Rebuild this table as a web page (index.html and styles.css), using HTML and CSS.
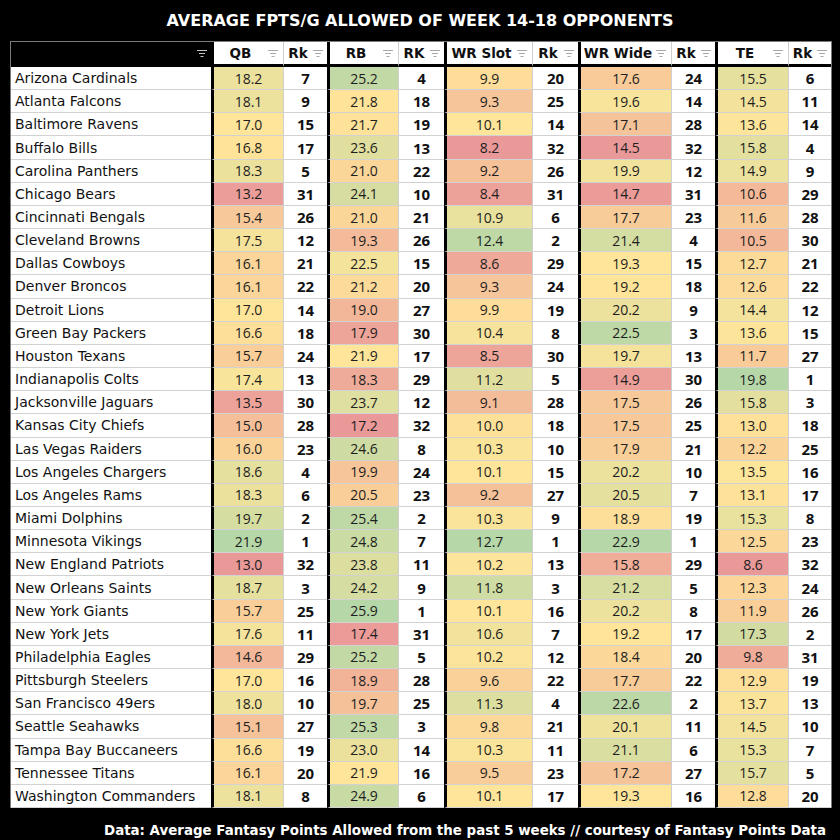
FILE: index.html
```html
<!DOCTYPE html>
<html lang="en">
<head>
<meta charset="utf-8">
<title>Average FPTS/G Allowed of Week 14-18 Opponents</title>
<link rel="stylesheet" href="styles.css">
</head>
<body>
<h1 class="title">AVERAGE FPTS/G ALLOWED OF WEEK 14-18 OPPONENTS</h1>
<div class="sheet">
  <div class="row head">
    <div class="hcell corner"><svg class="flt" viewBox="0 0 10 7"><path d="M0 .5h10M2 3.5h6M3.5 6.5h3"/></svg></div>
    <div class="hcell"><span class="lbl">QB</span><svg class="flt" viewBox="0 0 10 7"><path d="M0 .5h10M2 3.5h6M3.5 6.5h3"/></svg></div>
    <div class="hcell"><span class="lbl">Rk</span><svg class="flt" viewBox="0 0 10 7"><path d="M0 .5h10M2 3.5h6M3.5 6.5h3"/></svg></div>
    <div class="hcell"><span class="lbl">RB</span><svg class="flt" viewBox="0 0 10 7"><path d="M0 .5h10M2 3.5h6M3.5 6.5h3"/></svg></div>
    <div class="hcell"><span class="lbl">RK</span><svg class="flt" viewBox="0 0 10 7"><path d="M0 .5h10M2 3.5h6M3.5 6.5h3"/></svg></div>
    <div class="hcell"><span class="lbl">WR Slot</span><svg class="flt" viewBox="0 0 10 7"><path d="M0 .5h10M2 3.5h6M3.5 6.5h3"/></svg></div>
    <div class="hcell"><span class="lbl">Rk</span><svg class="flt" viewBox="0 0 10 7"><path d="M0 .5h10M2 3.5h6M3.5 6.5h3"/></svg></div>
    <div class="hcell"><span class="lbl">WR Wide</span><svg class="flt" viewBox="0 0 10 7"><path d="M0 .5h10M2 3.5h6M3.5 6.5h3"/></svg></div>
    <div class="hcell"><span class="lbl">Rk</span><svg class="flt" viewBox="0 0 10 7"><path d="M0 .5h10M2 3.5h6M3.5 6.5h3"/></svg></div>
    <div class="hcell"><span class="lbl">TE</span><svg class="flt" viewBox="0 0 10 7"><path d="M0 .5h10M2 3.5h6M3.5 6.5h3"/></svg></div>
    <div class="hcell"><span class="lbl">Rk</span><svg class="flt" viewBox="0 0 10 7"><path d="M0 .5h10M2 3.5h6M3.5 6.5h3"/></svg></div>
  </div>
  <div class="body">
    <div class="row"><span class="cell name">Arizona Cardinals</span><span class="cell val">18.2</span><span class="cell rk">7</span><span class="cell val">25.2</span><span class="cell rk">4</span><span class="cell val">9.9</span><span class="cell rk">20</span><span class="cell val">17.6</span><span class="cell rk">24</span><span class="cell val">15.5</span><span class="cell rk">6</span></div>
    <div class="row"><span class="cell name">Atlanta Falcons</span><span class="cell val">18.1</span><span class="cell rk">9</span><span class="cell val">21.8</span><span class="cell rk">18</span><span class="cell val">9.3</span><span class="cell rk">25</span><span class="cell val">19.6</span><span class="cell rk">14</span><span class="cell val">14.5</span><span class="cell rk">11</span></div>
    <div class="row"><span class="cell name">Baltimore Ravens</span><span class="cell val">17.0</span><span class="cell rk">15</span><span class="cell val">21.7</span><span class="cell rk">19</span><span class="cell val">10.1</span><span class="cell rk">14</span><span class="cell val">17.1</span><span class="cell rk">28</span><span class="cell val">13.6</span><span class="cell rk">14</span></div>
    <div class="row"><span class="cell name">Buffalo Bills</span><span class="cell val">16.8</span><span class="cell rk">17</span><span class="cell val">23.6</span><span class="cell rk">13</span><span class="cell val">8.2</span><span class="cell rk">32</span><span class="cell val">14.5</span><span class="cell rk">32</span><span class="cell val">15.8</span><span class="cell rk">4</span></div>
    <div class="row"><span class="cell name">Carolina Panthers</span><span class="cell val">18.3</span><span class="cell rk">5</span><span class="cell val">21.0</span><span class="cell rk">22</span><span class="cell val">9.2</span><span class="cell rk">26</span><span class="cell val">19.9</span><span class="cell rk">12</span><span class="cell val">14.9</span><span class="cell rk">9</span></div>
    <div class="row"><span class="cell name">Chicago Bears</span><span class="cell val">13.2</span><span class="cell rk">31</span><span class="cell val">24.1</span><span class="cell rk">10</span><span class="cell val">8.4</span><span class="cell rk">31</span><span class="cell val">14.7</span><span class="cell rk">31</span><span class="cell val">10.6</span><span class="cell rk">29</span></div>
    <div class="row"><span class="cell name">Cincinnati Bengals</span><span class="cell val">15.4</span><span class="cell rk">26</span><span class="cell val">21.0</span><span class="cell rk">21</span><span class="cell val">10.9</span><span class="cell rk">6</span><span class="cell val">17.7</span><span class="cell rk">23</span><span class="cell val">11.6</span><span class="cell rk">28</span></div>
    <div class="row"><span class="cell name">Cleveland Browns</span><span class="cell val">17.5</span><span class="cell rk">12</span><span class="cell val">19.3</span><span class="cell rk">26</span><span class="cell val">12.4</span><span class="cell rk">2</span><span class="cell val">21.4</span><span class="cell rk">4</span><span class="cell val">10.5</span><span class="cell rk">30</span></div>
    <div class="row"><span class="cell name">Dallas Cowboys</span><span class="cell val">16.1</span><span class="cell rk">21</span><span class="cell val">22.5</span><span class="cell rk">15</span><span class="cell val">8.6</span><span class="cell rk">29</span><span class="cell val">19.3</span><span class="cell rk">15</span><span class="cell val">12.7</span><span class="cell rk">21</span></div>
    <div class="row"><span class="cell name">Denver Broncos</span><span class="cell val">16.1</span><span class="cell rk">22</span><span class="cell val">21.2</span><span class="cell rk">20</span><span class="cell val">9.3</span><span class="cell rk">24</span><span class="cell val">19.2</span><span class="cell rk">18</span><span class="cell val">12.6</span><span class="cell rk">22</span></div>
    <div class="row"><span class="cell name">Detroit Lions</span><span class="cell val">17.0</span><span class="cell rk">14</span><span class="cell val">19.0</span><span class="cell rk">27</span><span class="cell val">9.9</span><span class="cell rk">19</span><span class="cell val">20.2</span><span class="cell rk">9</span><span class="cell val">14.4</span><span class="cell rk">12</span></div>
    <div class="row"><span class="cell name">Green Bay Packers</span><span class="cell val">16.6</span><span class="cell rk">18</span><span class="cell val">17.9</span><span class="cell rk">30</span><span class="cell val">10.4</span><span class="cell rk">8</span><span class="cell val">22.5</span><span class="cell rk">3</span><span class="cell val">13.6</span><span class="cell rk">15</span></div>
    <div class="row"><span class="cell name">Houston Texans</span><span class="cell val">15.7</span><span class="cell rk">24</span><span class="cell val">21.9</span><span class="cell rk">17</span><span class="cell val">8.5</span><span class="cell rk">30</span><span class="cell val">19.7</span><span class="cell rk">13</span><span class="cell val">11.7</span><span class="cell rk">27</span></div>
    <div class="row"><span class="cell name">Indianapolis Colts</span><span class="cell val">17.4</span><span class="cell rk">13</span><span class="cell val">18.3</span><span class="cell rk">29</span><span class="cell val">11.2</span><span class="cell rk">5</span><span class="cell val">14.9</span><span class="cell rk">30</span><span class="cell val">19.8</span><span class="cell rk">1</span></div>
    <div class="row"><span class="cell name">Jacksonville Jaguars</span><span class="cell val">13.5</span><span class="cell rk">30</span><span class="cell val">23.7</span><span class="cell rk">12</span><span class="cell val">9.1</span><span class="cell rk">28</span><span class="cell val">17.5</span><span class="cell rk">26</span><span class="cell val">15.8</span><span class="cell rk">3</span></div>
    <div class="row"><span class="cell name">Kansas City Chiefs</span><span class="cell val">15.0</span><span class="cell rk">28</span><span class="cell val">17.2</span><span class="cell rk">32</span><span class="cell val">10.0</span><span class="cell rk">18</span><span class="cell val">17.5</span><span class="cell rk">25</span><span class="cell val">13.0</span><span class="cell rk">18</span></div>
    <div class="row"><span class="cell name">Las Vegas Raiders</span><span class="cell val">16.0</span><span class="cell rk">23</span><span class="cell val">24.6</span><span class="cell rk">8</span><span class="cell val">10.3</span><span class="cell rk">10</span><span class="cell val">17.9</span><span class="cell rk">21</span><span class="cell val">12.2</span><span class="cell rk">25</span></div>
    <div class="row"><span class="cell name">Los Angeles Chargers</span><span class="cell val">18.6</span><span class="cell rk">4</span><span class="cell val">19.9</span><span class="cell rk">24</span><span class="cell val">10.1</span><span class="cell rk">15</span><span class="cell val">20.2</span><span class="cell rk">10</span><span class="cell val">13.5</span><span class="cell rk">16</span></div>
    <div class="row"><span class="cell name">Los Angeles Rams</span><span class="cell val">18.3</span><span class="cell rk">6</span><span class="cell val">20.5</span><span class="cell rk">23</span><span class="cell val">9.2</span><span class="cell rk">27</span><span class="cell val">20.5</span><span class="cell rk">7</span><span class="cell val">13.1</span><span class="cell rk">17</span></div>
    <div class="row"><span class="cell name">Miami Dolphins</span><span class="cell val">19.7</span><span class="cell rk">2</span><span class="cell val">25.4</span><span class="cell rk">2</span><span class="cell val">10.3</span><span class="cell rk">9</span><span class="cell val">18.9</span><span class="cell rk">19</span><span class="cell val">15.3</span><span class="cell rk">8</span></div>
    <div class="row"><span class="cell name">Minnesota Vikings</span><span class="cell val">21.9</span><span class="cell rk">1</span><span class="cell val">24.8</span><span class="cell rk">7</span><span class="cell val">12.7</span><span class="cell rk">1</span><span class="cell val">22.9</span><span class="cell rk">1</span><span class="cell val">12.5</span><span class="cell rk">23</span></div>
    <div class="row"><span class="cell name">New England Patriots</span><span class="cell val">13.0</span><span class="cell rk">32</span><span class="cell val">23.8</span><span class="cell rk">11</span><span class="cell val">10.2</span><span class="cell rk">13</span><span class="cell val">15.8</span><span class="cell rk">29</span><span class="cell val">8.6</span><span class="cell rk">32</span></div>
    <div class="row"><span class="cell name">New Orleans Saints</span><span class="cell val">18.7</span><span class="cell rk">3</span><span class="cell val">24.2</span><span class="cell rk">9</span><span class="cell val">11.8</span><span class="cell rk">3</span><span class="cell val">21.2</span><span class="cell rk">5</span><span class="cell val">12.3</span><span class="cell rk">24</span></div>
    <div class="row"><span class="cell name">New York Giants</span><span class="cell val">15.7</span><span class="cell rk">25</span><span class="cell val">25.9</span><span class="cell rk">1</span><span class="cell val">10.1</span><span class="cell rk">16</span><span class="cell val">20.2</span><span class="cell rk">8</span><span class="cell val">11.9</span><span class="cell rk">26</span></div>
    <div class="row"><span class="cell name">New York Jets</span><span class="cell val">17.6</span><span class="cell rk">11</span><span class="cell val">17.4</span><span class="cell rk">31</span><span class="cell val">10.6</span><span class="cell rk">7</span><span class="cell val">19.2</span><span class="cell rk">17</span><span class="cell val">17.3</span><span class="cell rk">2</span></div>
    <div class="row"><span class="cell name">Philadelphia Eagles</span><span class="cell val">14.6</span><span class="cell rk">29</span><span class="cell val">25.2</span><span class="cell rk">5</span><span class="cell val">10.2</span><span class="cell rk">12</span><span class="cell val">18.4</span><span class="cell rk">20</span><span class="cell val">9.8</span><span class="cell rk">31</span></div>
    <div class="row"><span class="cell name">Pittsburgh Steelers</span><span class="cell val">17.0</span><span class="cell rk">16</span><span class="cell val">18.9</span><span class="cell rk">28</span><span class="cell val">9.6</span><span class="cell rk">22</span><span class="cell val">17.7</span><span class="cell rk">22</span><span class="cell val">12.9</span><span class="cell rk">19</span></div>
    <div class="row"><span class="cell name">San Francisco 49ers</span><span class="cell val">18.0</span><span class="cell rk">10</span><span class="cell val">19.7</span><span class="cell rk">25</span><span class="cell val">11.3</span><span class="cell rk">4</span><span class="cell val">22.6</span><span class="cell rk">2</span><span class="cell val">13.7</span><span class="cell rk">13</span></div>
    <div class="row"><span class="cell name">Seattle Seahawks</span><span class="cell val">15.1</span><span class="cell rk">27</span><span class="cell val">25.3</span><span class="cell rk">3</span><span class="cell val">9.8</span><span class="cell rk">21</span><span class="cell val">20.1</span><span class="cell rk">11</span><span class="cell val">14.5</span><span class="cell rk">10</span></div>
    <div class="row"><span class="cell name">Tampa Bay Buccaneers</span><span class="cell val">16.6</span><span class="cell rk">19</span><span class="cell val">23.0</span><span class="cell rk">14</span><span class="cell val">10.3</span><span class="cell rk">11</span><span class="cell val">21.1</span><span class="cell rk">6</span><span class="cell val">15.3</span><span class="cell rk">7</span></div>
    <div class="row"><span class="cell name">Tennessee Titans</span><span class="cell val">16.1</span><span class="cell rk">20</span><span class="cell val">21.9</span><span class="cell rk">16</span><span class="cell val">9.5</span><span class="cell rk">23</span><span class="cell val">17.2</span><span class="cell rk">27</span><span class="cell val">15.7</span><span class="cell rk">5</span></div>
    <div class="row"><span class="cell name">Washington Commanders</span><span class="cell val">18.1</span><span class="cell rk">8</span><span class="cell val">24.9</span><span class="cell rk">6</span><span class="cell val">10.1</span><span class="cell rk">17</span><span class="cell val">19.3</span><span class="cell rk">16</span><span class="cell val">12.8</span><span class="cell rk">20</span></div>
  </div>
</div>
<p class="footer">Data: Average Fantasy Points Allowed from the past 5 weeks // courtesy of Fantasy Points Data</p>
<script src="script.js"></script>
</body>
</html>
```

FILE: styles.css
```css
* { box-sizing: border-box; }

html, body {
  margin: 0;
  padding: 0;
  background: #000;
}

body {
  width: 840px;
  height: 840px;
  overflow: hidden;
  font-family: "DejaVu Sans", "Open Sans", sans-serif;
}

.title {
  margin: 0;
  height: 41px;
  display: flex;
  align-items: center;
  justify-content: center;
  color: #fff;
  font-size: 16px;
  font-weight: bold;
}

.sheet {
  margin-left: 10px;
  width: 822px;
  border: 1px solid #7a7a7a;
  border-bottom: none;
}

.row {
  display: grid;
  grid-template-columns: 200px 73px 43px 72px 45px 89px 45px 94px 43px 74px 42px;
}

.head {
  height: 25px;
  background: #fff;
}

.hcell {
  display: flex;
  align-items: center;
  padding: 0 4px 0 2px;
  border-bottom: 3px solid #000;
  font-size: 13.5px;
  font-weight: bold;
  color: #111;
  white-space: nowrap;
}

.hcell .lbl {
  flex: 1;
  text-align: center;
  padding-right: 3px;
}

.row > .hcell:nth-child(2n) {
  padding-right: 5px;
}

.corner {
  background: #000;
  justify-content: flex-end;
  padding-right: 4px;
}

.flt {
  width: 10px;
  height: 7px;
  flex: none;
  fill: none;
  stroke: currentColor;
  stroke-width: 1;
}

.hcell .flt { color: #a8a8a8; }
.corner .flt { color: #c4c4c4; }

.body {
  display: flex;
  flex-direction: column;
  height: 741px;
}

.body .row {
  flex: 1 1 0;
  min-height: 0;
  background: #fff;
}

.cell {
  display: flex;
  align-items: center;
  justify-content: center;
  border-bottom: 1px solid #d2d2d2;
  color: #1e1e1e;
  font-size: 13px;
  white-space: nowrap;
}

.row > :nth-child(2n) {
  border-left: 3px solid #000;
  border-right: 1px solid #cfcfcf;
}

.name {
  justify-content: flex-start;
  padding-left: 4px;
  font-size: 14px;
  color: #111;
}

.val {
  font-family: "Open Sans", "DejaVu Sans", sans-serif;
  font-size: 14px;
}

.rk {
  font-family: "Open Sans", "DejaVu Sans", sans-serif;
  font-weight: bold;
  font-size: 15px;
  color: #111;
}

.footer {
  margin: 15px 0 0;
  padding-right: 14px;
  text-align: right;
  color: #fff;
  font-size: 13.4px;
  font-weight: bold;
  line-height: 16px;
}
```

FILE: script.js
```js
(function () {
  var LOW = [234, 153, 153];
  var MID = [255, 229, 153];
  var HIGH = [182, 215, 168];
  var rows = Array.prototype.slice.call(document.querySelectorAll('.body .row'));
  [1, 3, 5, 7, 9].forEach(function (col) {
    var cells = rows.map(function (r) { return r.children[col]; });
    var vals = cells.map(function (c) { return parseFloat(c.textContent); });
    var s = vals.slice().sort(function (a, b) { return a - b; });
    var n = s.length;
    var pos = 0.5 * (n - 1);
    var lo = Math.floor(pos);
    var med = s[lo] + (s[Math.min(lo + 1, n - 1)] - s[lo]) * (pos - lo);
    var min = s[0], max = s[n - 1];
    cells.forEach(function (c, i) {
      var v = vals[i], a, b, t;
      if (v <= med) { a = LOW; b = MID; t = med === min ? 1 : (v - min) / (med - min); }
      else { a = MID; b = HIGH; t = max === med ? 0 : (v - med) / (max - med); }
      var rgb = a.map(function (x, k) { return Math.round(x + (b[k] - x) * t); });
      c.style.backgroundColor = 'rgb(' + rgb.join(',') + ')';
    });
  });
})();
```
